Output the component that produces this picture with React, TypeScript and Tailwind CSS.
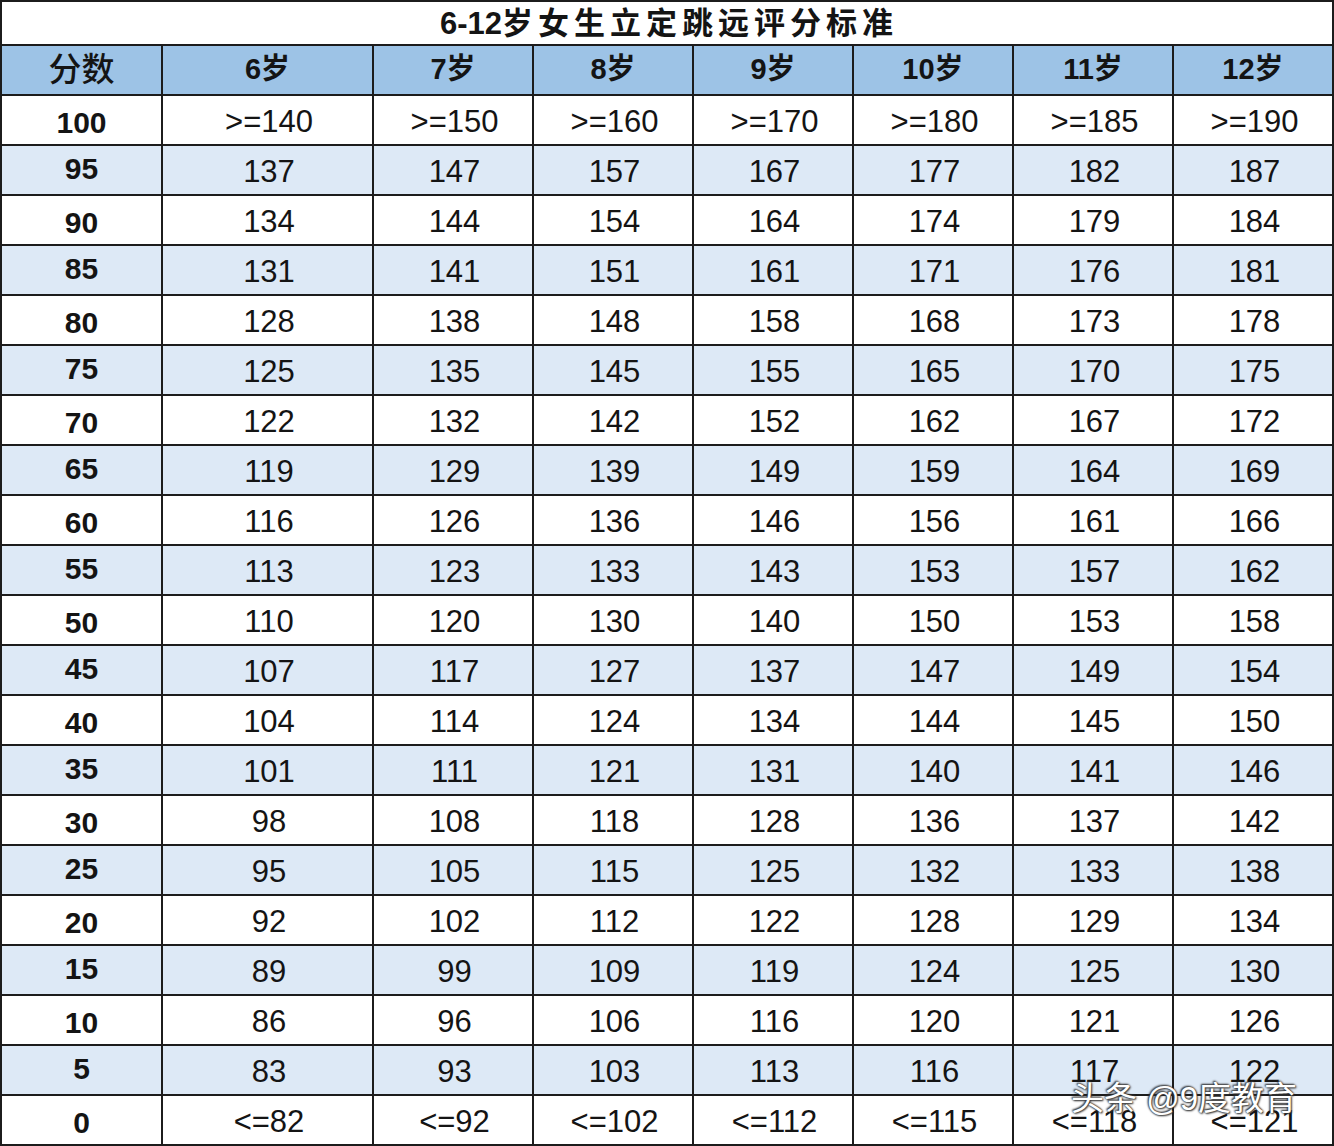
const ages = ["6岁", "7岁", "8岁", "9岁", "10岁", "11岁", "12岁"];

const rows: [string, string[]][] = [
  ["100", [">=140", ">=150", ">=160", ">=170", ">=180", ">=185", ">=190"]],
  ["95", ["137", "147", "157", "167", "177", "182", "187"]],
  ["90", ["134", "144", "154", "164", "174", "179", "184"]],
  ["85", ["131", "141", "151", "161", "171", "176", "181"]],
  ["80", ["128", "138", "148", "158", "168", "173", "178"]],
  ["75", ["125", "135", "145", "155", "165", "170", "175"]],
  ["70", ["122", "132", "142", "152", "162", "167", "172"]],
  ["65", ["119", "129", "139", "149", "159", "164", "169"]],
  ["60", ["116", "126", "136", "146", "156", "161", "166"]],
  ["55", ["113", "123", "133", "143", "153", "157", "162"]],
  ["50", ["110", "120", "130", "140", "150", "153", "158"]],
  ["45", ["107", "117", "127", "137", "147", "149", "154"]],
  ["40", ["104", "114", "124", "134", "144", "145", "150"]],
  ["35", ["101", "111", "121", "131", "140", "141", "146"]],
  ["30", ["98", "108", "118", "128", "136", "137", "142"]],
  ["25", ["95", "105", "115", "125", "132", "133", "138"]],
  ["20", ["92", "102", "112", "122", "128", "129", "134"]],
  ["15", ["89", "99", "109", "119", "124", "125", "130"]],
  ["10", ["86", "96", "106", "116", "120", "121", "126"]],
  ["5", ["83", "93", "103", "113", "116", "117", "122"]],
  ["0", ["<=82", "<=92", "<=102", "<=112", "<=115", "<=118", "<=121"]],
];

export default function App() {
  return (
    <main className="relative w-[1334px] h-[1146px] bg-white font-['Liberation_Sans','Noto_Sans_CJK_SC',sans-serif] text-[#141414]">
      <div className="grid grid-cols-[159px_209px_repeat(6,158px)] grid-rows-[42px_48px_repeat(21,48px)] gap-[2px] p-[2px] bg-[#1c1c1c]">
        <div className="col-span-8 bg-white flex items-center justify-center pt-[2px] pl-[4px] text-[31px] font-bold">
          6-12<span className="tracking-[5px]">岁女生立定跳远评分标准</span>
        </div>

        <div className="bg-[#9dc3e6] flex items-center justify-center text-[33px] font-medium">
          分数
        </div>
        {ages.map((a) => (
          <div
            key={a}
            className="bg-[#9dc3e6] flex items-center justify-center text-[29px] font-bold"
          >
            {a}
          </div>
        ))}

        {rows.map(([score, vals], i) => {
          const blue = i % 2 === 1;
          return [
            <div
              key={score}
              className={
                blue
                  ? "bg-[#dde9f6] flex items-center justify-center pb-[3px] text-[30px] font-bold"
                  : "bg-white flex items-center justify-center pt-[4px] text-[30px] font-bold"
              }
            >
              {score}
            </div>,
            ...vals.map((v, j) => (
              <div
                key={score + "-" + j}
                className={
                  blue
                    ? "bg-[#dde9f6] flex items-center justify-center pt-[5px] pl-[3px] text-[31px]"
                    : "bg-white flex items-center justify-center pt-[5px] pl-[3px] text-[31px]"
                }
              >
                {v}
              </div>
            )),
          ];
        })}
      </div>

      {/* 水印 */}
      <div className="absolute left-[1071px] top-[1082px] text-[33px] leading-none text-white [text-shadow:0_0_2px_#333,1px_1px_2px_#333,-1px_-1px_2px_#333]">
        头条 @9度教育
      </div>
    </main>
  );
}
